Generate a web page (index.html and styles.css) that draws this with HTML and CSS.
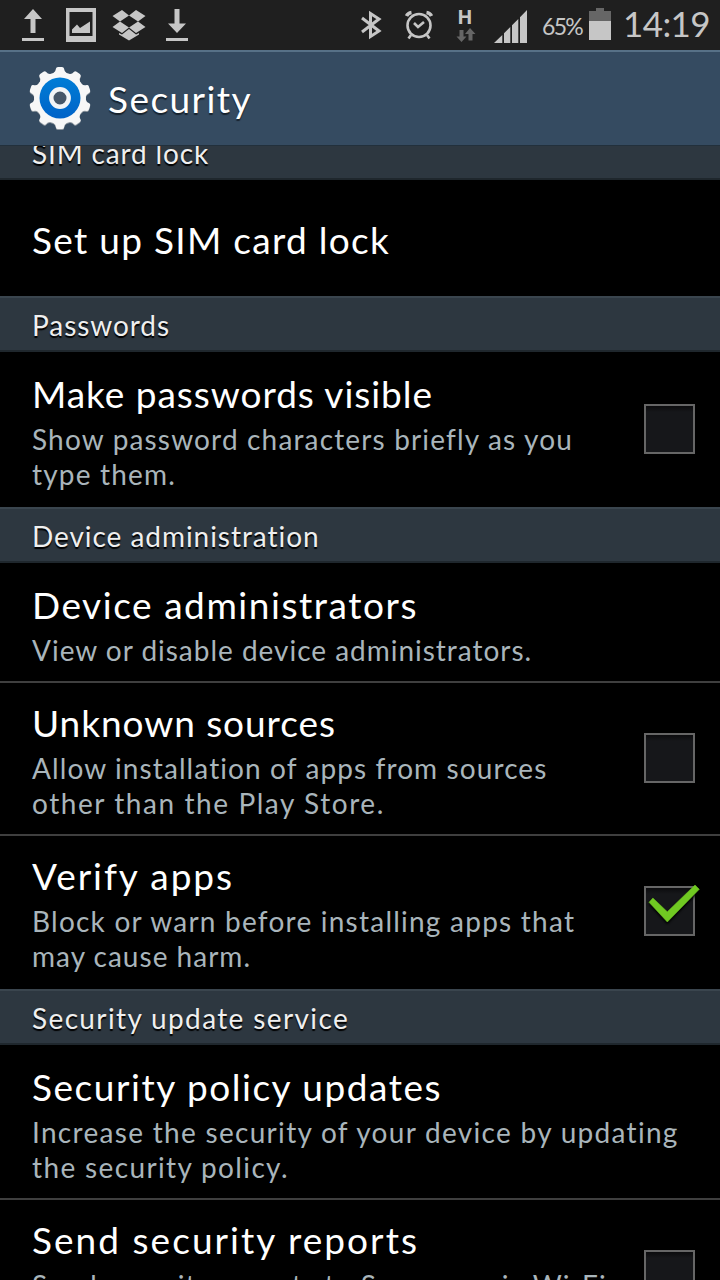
FILE: index.html
```
<!DOCTYPE html>
<html lang="en">
<head>
<meta charset="utf-8">
<title>Security</title>
<link rel="stylesheet" href="styles.css">
</head>
<body>
<div class="screen">
  <div class="status">
    <svg class="s-up" viewBox="0 0 56 50"><path d="M33 9 42 19H35.500V33H30.500V19H24ZM22 38H44V41H22Z"/></svg>
    <svg class="s-pic" viewBox="56 0 48 50"><path fill-rule="evenodd" d="M66 8H96V42H66ZM69.500 12V36H92.500V12Z"/><path d="M72 33V29.500L77 24.500 80 28 90 21.500V33Z"/></svg>
    <svg class="s-box" viewBox="104 0 50 50"><path d="M122 10 129 15.500 120 21.500 112.500 16ZM136 10 145.500 16 138 21.500 129 15.500ZM120 21.500 129 27.500 122 33 112.500 27ZM138 21.500 145.500 27 136 33 129 27.500ZM129 29 136 34.500 139 33V34.500L129 40.500 119 34.500V33L122 34.500Z"/></svg>
    <svg class="s-down" viewBox="154 0 46 50"><path d="M177 33 186 23.500H179.500V9H174.500V23.500H168ZM166 38H188V41H166Z"/></svg>
    <span class="spacer"></span>
    <svg class="s-bt" viewBox="350 0 45 50"><path class="line bold" d="M362 18 379 31 370.500 36.500V13.500L379 19 362 32"/></svg>
    <svg class="s-alarm" viewBox="395 0 50 50"><g class="line"><circle cx="419" cy="25.500" r="11.500"/><path d="M414 23 418 27 424 22M411 35 408.500 38.500M427 35 429.500 38.500"/></g><path class="ear" d="M406.500 16Q408 13 411.500 12.500M431.500 16Q430 13 426.500 12.500"/></svg>
    <svg class="s-h" viewBox="445 0 40 50"><text class="net" x="457.200" y="24.200">H</text><path class="dim" d="M459.500 30H463.500V36.500H466.500L461.500 42 456.500 36.500H459.500ZM470 28 475.500 34H472.500V40.500H468.500V34H465Z"/></svg>
    <svg class="s-sig" viewBox="485 0 57 50"><path d="M494 43 502.300 35V43ZM504 43V33.300L510.300 27V43ZM512 43V25.300L518.300 19V43ZM520 43V17.300L527 10V43Z"/></svg>
    <span class="percent">65%</span>
    <svg class="s-bat" viewBox="584 0 39 50"><path class="dim" d="M596 8H604V11H611V21H589V11H596Z"/><path d="M589 21H611V40H589Z"/></svg>
    <span class="clock">14:19</span>
  </div>
  <header class="bar">
    <svg class="gear" viewBox="-32 -32 64 64">
      <defs>
        <linearGradient id="blue" x1="0" y1="0" x2="0" y2="1"><stop offset="0" stop-color="#007dd6"/><stop offset="1" stop-color="#0063c8"/></linearGradient>
        <path id="teeth" d="M-6.500-25Q-4.300-26-4-29.500Q-3.800-31-2-31H2Q3.800-31 4-29.500Q4.300-26 6.500-25V-20H-6.500Z"/>
        <g id="cog"><circle r="26"/><use href="#teeth"/><use href="#teeth" transform="rotate(36)"/><use href="#teeth" transform="rotate(72)"/><use href="#teeth" transform="rotate(108)"/><use href="#teeth" transform="rotate(144)"/><use href="#teeth" transform="rotate(180)"/><use href="#teeth" transform="rotate(216)"/><use href="#teeth" transform="rotate(252)"/><use href="#teeth" transform="rotate(288)"/><use href="#teeth" transform="rotate(324)"/></g>
      </defs>
      <use href="#cog" y="1" fill="#8d969e"/>
      <use href="#cog" fill="#f7f7f7"/>
      <circle r="20.500" fill="url(#blue)"/>
      <circle r="8.700" fill="#465668" stroke="#f2f4f6" stroke-width="4.400"/>
    </svg>
    <h1 class="heading">Security</h1>
  </header>
  <main class="list">
    <h2 class="cat clipped"><span class="a1">SIM card lock</span></h2>
    <div class="row single"><div class="title a2">Set up SIM card lock</div></div>

    <h2 class="cat"><span class="a3">Passwords</span></h2>
    <div class="row first">
      <div class="text"><div class="title a4">Make passwords visible</div>
      <div class="sum"><div class="a5">Show password characters briefly as you</div><div class="a6">type them.</div></div></div>
      <span class="check"></span>
    </div>

    <h2 class="cat"><span class="a7">Device administration</span></h2>
    <div class="row first short line-below">
      <div class="text"><div class="title a8">Device administrators</div>
      <div class="sum"><div class="a9">View or disable device administrators.</div></div></div>
    </div>
    <div class="row line-below">
      <div class="text"><div class="title a10">Unknown sources</div>
      <div class="sum"><div class="a11">Allow installation of apps from sources</div><div class="a12">other than the Play Store.</div></div></div>
      <span class="check"></span>
    </div>
    <div class="row">
      <div class="text"><div class="title a13">Verify apps</div>
      <div class="sum"><div class="a14">Block or warn before installing apps that</div><div class="a15">may cause harm.</div></div></div>
      <span class="check"><svg class="tick" viewBox="644 880 60 60"><path d="M649 902.300 652.900 898 667.300 911.700 695 885 699.300 889.300 667.300 922Z"/></svg></span>
    </div>

    <h2 class="cat"><span class="a16">Security update service</span></h2>
    <div class="row first line-below">
      <div class="text"><div class="title a17">Security policy updates</div>
      <div class="sum"><div class="a18">Increase the security of your device by updating</div><div class="a19">the security policy.</div></div></div>
    </div>
    <div class="row last">
      <div class="text"><div class="title a20">Send security reports</div>
      <div class="sum"><div class="a21">Send security reports to Samsung via Wi-Fi</div></div></div>
      <span class="check"></span>
    </div>
  </main>
</div>
</body>
</html>
```
FILE: styles.css
```
* { box-sizing: border-box; }
body { margin: 0; background: #000; }
h1, h2 { margin: 0; font-weight: 400; }

.screen {
  width: 720px;
  height: 1280px;
  overflow: hidden;
  display: flex;
  flex-direction: column;
  background: #000;
  color: #fff;
  font-family: Lato, "Open Sans", sans-serif;
  white-space: nowrap;
}

/* Status bar */
.status {
  display: flex;
  flex: none;
  height: 50px;
  background: #1f1f1f;
  color: #c6c6c6;
}
.status svg { flex: none; height: 50px; fill: #c6c6c6; }
.s-up { width: 56px; }
.s-pic { width: 48px; }
.s-box { width: 50px; }
.s-down { width: 46px; }
.spacer { flex: 1; }
.s-bt { width: 45px; }
.s-alarm { width: 50px; }
.s-h { width: 40px; }
.s-sig { width: 57px; }
.s-bat { width: 39px; }
.line { fill: none; stroke: #c6c6c6; stroke-width: 2.6; }
.bold { stroke-width: 3; }
.ear { fill: none; stroke: #c6c6c6; stroke-width: 3.6; }
.status .dim { fill: #666; }
.net { font: 700 20px "Open Sans", sans-serif; }
.percent { width: 42px; font-size: 23px; line-height: 53px; letter-spacing: -1.7px; }
.clock { width: 97px; font-size: 35px; line-height: 46px; letter-spacing: -0.6px; }

/* Title bar */
.bar {
  display: flex;
  flex: none;
  align-items: center;
  height: 96px;
  padding-left: 28px;
  background: #354b61;
  border-top: 2px solid #577187;
  border-bottom: 1px solid #22303c;
}
.gear { width: 64px; height: 64px; margin: 0 16px 2px 0; }
.heading { margin-top: 1px; font-size: 37px; line-height: 46px; letter-spacing: 1.44px; text-shadow: 0 2px 1px #17222d; }

/* Preference list */
.list { flex: 1; overflow: hidden; }
.cat {
  height: 56px;
  padding-left: 32px;
  background: #2d3740;
  border-top: 2px solid #3a454e;
  border-bottom: 2px solid #1f272d;
  color: #efefef;
  font-size: 28px;
  line-height: 55px;
  text-shadow: 0 2px 1px #000;
}
.clipped { margin-top: -22px; }
.row {
  display: flex;
  justify-content: space-between;
  height: 153px;
  padding: 18px 25px 0 32px;
}
.first { height: 155px; padding-top: 20px; }
.short { height: 120px; }
.single { height: 116px; padding-top: 38px; }
.last { height: 151px; }
.line-below { border-bottom: 2px solid #3f3f3f; }
.title { font-size: 37px; line-height: 44px; }
.sum { margin-top: 6px; color: #a9b5bb; font-size: 28px; line-height: 35px; }

.check {
  flex: none;
  width: 51px;
  height: 50px;
  margin-top: 32px;
  border: 2px solid #666;
  background: linear-gradient(#0b0b0d, #16171a 6px);
}
.tick { display: block; width: 60px; height: 60px; margin: -8px 0 0 -2px; fill: #70c922; stroke: #70c922; stroke-width: .5; filter: drop-shadow(0 2px 1px #000); }

/* Letter fitting */
.a1 { letter-spacing: .84px; }
.a2 { letter-spacing: 1.28px; }
.a3 { letter-spacing: .93px; }
.a4 { letter-spacing: .96px; }
.a5 { letter-spacing: 1.16px; }
.a6 { letter-spacing: 1.18px; }
.a7 { letter-spacing: .95px; }
.a8 { letter-spacing: 1.55px; }
.a9 { letter-spacing: .98px; }
.a10 { letter-spacing: .94px; }
.a11 { letter-spacing: 1.1px; }
.a12 { letter-spacing: 1.57px; }
.a13 { letter-spacing: 1.94px; }
.a14 { letter-spacing: 1.23px; }
.a15 { letter-spacing: 1.01px; }
.a16 { letter-spacing: 1.37px; }
.a17 { letter-spacing: 1.54px; }
.a18 { letter-spacing: 1.3px; }
.a19 { letter-spacing: 1.36px; }
.a20 { letter-spacing: 2.04px; }
.a21 { letter-spacing: 1.13px; }
```
